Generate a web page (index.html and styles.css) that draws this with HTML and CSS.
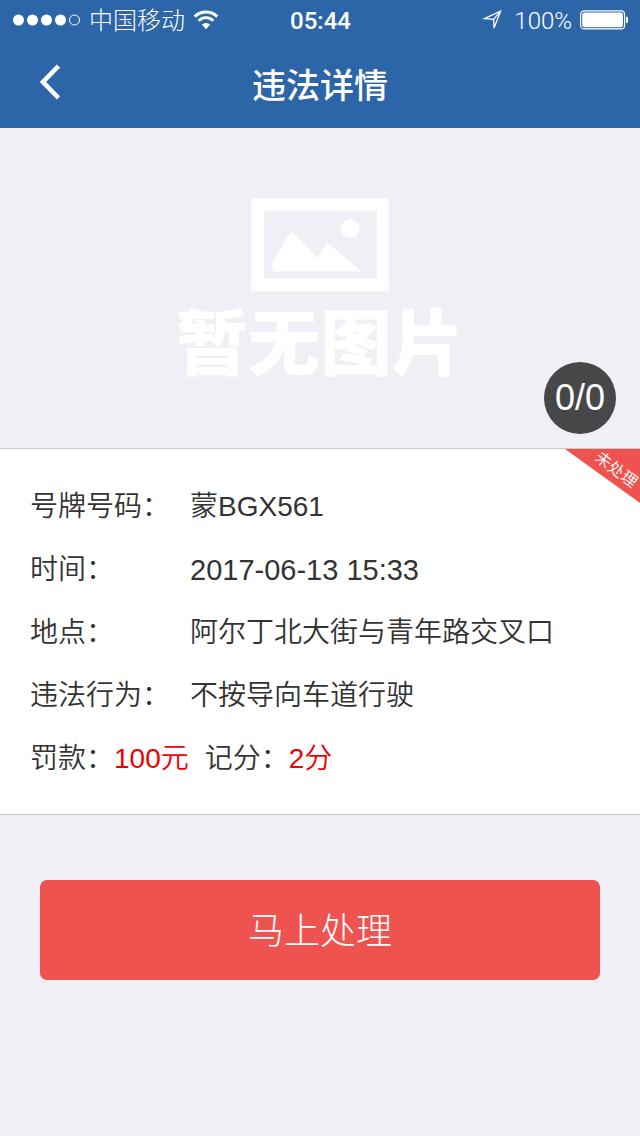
FILE: index.html
```html
<!DOCTYPE html>
<html lang="zh-CN">
<head>
<meta charset="utf-8">
<meta name="viewport" content="width=device-width, initial-scale=1">
<title>违法详情</title>
<link rel="stylesheet" href="styles.css">
</head>
<body>
<header class="top">
  <div class="status">
    <div class="status-side">
      <svg class="signal" width="68" height="12" viewBox="0 0 68 12" fill="#fff" aria-hidden="true">
        <circle cx="5.5" cy="6" r="5.5"/><circle cx="19.5" cy="6" r="5.5"/><circle cx="33.5" cy="6" r="5.5"/><circle cx="47.5" cy="6" r="5.5"/>
        <circle cx="61.5" cy="6" r="5" fill="none" stroke="#fff"/>
      </svg>
      <span class="carrier">中国移动</span>
      <svg width="26" height="20" viewBox="0 0 26 20" fill="none" stroke="#fff" aria-hidden="true">
        <path d="M1.700 6.600a16 16 0 0 1 22.600 0" stroke-width="3"/>
        <path d="M5.700 10.700a10.400 10.400 0 0 1 14.600 0" stroke-width="2.8"/>
        <path d="M13 19.200 8.800 14.600a6.200 6.200 0 0 1 8.400 0z" fill="#fff" stroke="none"/>
      </svg>
    </div>
    <time class="clock">05:44</time>
    <div class="status-side status-right">
      <svg width="20" height="20" viewBox="0 0 20 20" fill="none" stroke="#fff" stroke-width="1.3" aria-hidden="true">
        <path d="M18.600 1.200 2.200 8.600 11.600 9.400 12 18z"/><path d="M18.600 1.200 11.600 9.400"/>
      </svg>
      <span class="percent">100%</span>
      <svg width="48" height="20" viewBox="0 0 48 20" aria-hidden="true">
        <rect x=".6" y=".9" width="44" height="18" rx="3.5" fill="none" stroke="#fff" stroke-width="1.1"/>
        <rect x="2.2" y="2.5" width="40.8" height="14.8" rx="2" fill="#fff"/>
        <path d="M46 6.500q2.500.5 2.500 3.400t-2.500 3.400z" fill="#fff"/>
      </svg>
    </div>
  </div>
  <div class="navbar">
    <button class="back" type="button" aria-label="返回">
      <svg width="20" height="36" viewBox="0 0 20 36" fill="none" stroke="#fff" stroke-width="4.6" aria-hidden="true"><path d="M18.500 2 3 18l15.500 16"/></svg>
    </button>
    <h1 class="title">违法详情</h1>
  </div>
</header>
<main>
  <section class="photo">
    <svg width="138" height="94" viewBox="0 0 138 94" fill="#fff" aria-hidden="true">
      <path fill-rule="evenodd" d="M0 0h138v93.500H0zM13 12.500v68h113v-68z"/>
      <path d="M21.500 73.500V64L40 33l26.500 27L76 44.500l35 29z"/>
      <ellipse cx="99" cy="30.500" rx="9.500" ry="9"/>
    </svg>
    <p class="empty">暂无图片</p>
    <span class="count">0/0</span>
  </section>
  <section class="card">
    <div class="ribbon"><span class="ribbon-text">未处理</span></div>
    <dl class="list">
      <div class="row"><dt class="label">号牌号码：</dt><dd>蒙BGX561</dd></div>
      <div class="row"><dt class="label">时间：</dt><dd class="date">2017-06-13 15:33</dd></div>
      <div class="row"><dt class="label">地点：</dt><dd>阿尔丁北大街与青年路交叉口</dd></div>
      <div class="row"><dt class="label">违法行为：</dt><dd>不按导向车道行驶</dd></div>
      <div class="row"><dt>罚款：</dt><dd class="penalty">100元</dd><dt>记分：</dt><dd class="penalty">2分</dd></div>
    </dl>
  </section>
  <div class="actions"><button class="submit" type="button">马上处理</button></div>
</main>
</body>
</html>
```
FILE: styles.css
```css
* { box-sizing: border-box; margin: 0; padding: 0; }
body {
  min-height: 100vh;
  background: #efeff5;
  color: #333;
  font-family: "Liberation Sans", "Noto Sans CJK SC", sans-serif;
}
button { border: 0; font-family: inherit; color: #fff; cursor: pointer; }
svg { display: block; flex: none; }
.top { background: #2c66a8; color: #fff; }
.status {
  display: grid;
  grid-template-columns: 1fr auto 1fr;
  align-items: center;
  height: 40px;
  padding: 0 12px 0 13px;
  font-size: 24px;
  line-height: 40px;
}
.status-side { display: flex; align-items: center; gap: 8px; }
.status-right { justify-content: flex-end; }
.carrier { padding-top: 2px; line-height: 38px; font-weight: 300; }
.clock { font-family: Roboto, sans-serif; font-weight: 500; padding-top: 2px; line-height: 38px; }
.percent { margin-left: 4px; font-family: Roboto, sans-serif; font-weight: 300; padding-top: 2px; line-height: 38px; }
.navbar {
  display: grid;
  grid-template-columns: 60px 1fr 60px;
  align-items: center;
  height: 88px;
  padding: 0 20px;
}
.back { display: flex; align-items: center; height: 60px; padding: 0 20px; margin-bottom: 4px; background: transparent; }
.title { padding-top: 4px; font-size: 34px; font-weight: 500; line-height: 48px; text-align: center; }
.photo {
  position: relative;
  display: flex;
  flex-direction: column;
  align-items: center;
  gap: 16px;
  height: 320px;
  padding-top: 70px;
}
.empty { color: #fff; font-size: 72px; font-weight: 900; line-height: 72px; }
.count {
  position: absolute;
  right: 24px;
  bottom: 14px;
  width: 72px;
  height: 72px;
  border-radius: 50%;
  background: #474749;
  color: #fff;
  font-size: 36px;
  line-height: 72px;
  text-align: center;
}
.card {
  position: relative;
  padding: 26px 30px 24px;
  background: #fff;
  border-top: 1px solid #c8c7cc;
  border-bottom: 1px solid #c8c7cc;
}
.list { font-size: 28px; line-height: 36px; font-weight: 350; }
.row { display: flex; align-items: center; min-height: 63px; }
.label { flex: none; width: 160px; }
.date { font-size: 29px; }
.penalty { margin-right: 16px; color: #f00000; }
.ribbon {
  position: absolute;
  top: 0;
  right: 0;
  width: 75px;
  height: 54px;
  background: #ee534f;
  clip-path: polygon(0 0, 100% 0, 100% 100%);
}
.ribbon-text {
  position: absolute;
  top: 13px;
  right: 0;
  color: #fff;
  font-size: 16px;
  line-height: 16px;
  font-weight: 350;
  transform: rotate(37deg);
}
.actions { padding: 65px 40px; }
.submit {
  width: 100%;
  height: 100px;
  padding-bottom: 4px;
  border-radius: 7px;
  background: #ee534f;
  font-size: 36px;
  font-weight: 300;
}
```
